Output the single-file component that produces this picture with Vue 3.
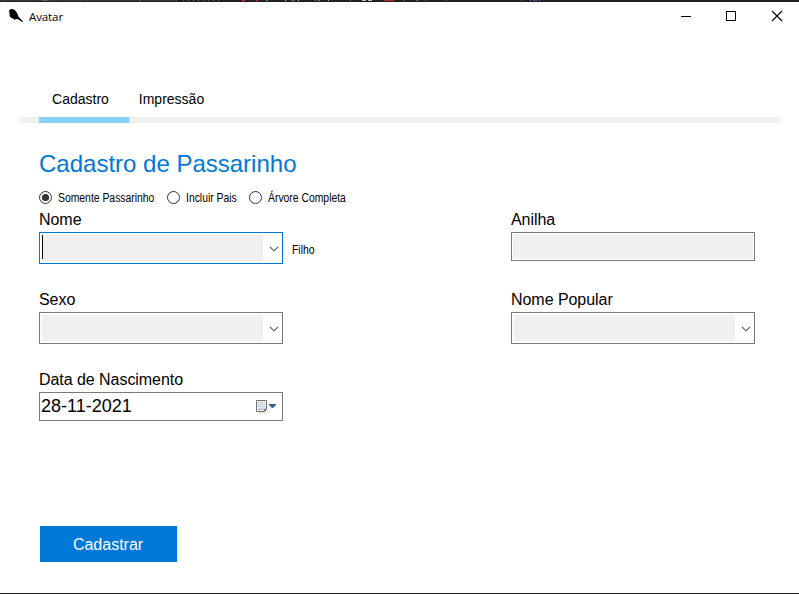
<script setup>
import { ref } from 'vue'

const tabs = ['Cadastro', 'Impressão']
const activeTab = ref('Cadastro')
const modes = [
  { label: 'Somente Passarinho', cls: 'm1' },
  { label: 'Incluir Pais', cls: 'm2' },
  { label: 'Árvore Completa', cls: 'm3' },
]
const mode = ref('Somente Passarinho')
// Coloured pixels visible along the strip above the window: x, width, colour
const specks = [
  [3, 1, '#315a78'], [23, 2, '#555'], [42, 6, '#606060'], [50, 1, '#397078'], [54, 1, '#555'], [66, 1, '#315a78'],
  [74, 1, '#704848'], [81, 1, '#555'], [86, 1, '#555'], [139, 2, '#555'], [176, 1, '#2b5c88'], [183, 1, '#486a78'],
  [188, 1, '#397078'], [193, 1, '#486a78'], [198, 1, '#397078'], [203, 1, '#705048'], [208, 1, '#486a78'],
  [213, 1, '#705048'], [218, 1, '#397078'], [242, 3, '#d53740'], [256, 2, '#b83440'], [266, 2, '#777'],
  [285, 1, '#e3c784'], [291, 4, '#286bab'], [298, 1, '#e3c784'], [315, 1, '#999'], [318, 2, '#3c88d0'],
  [328, 1, '#aaa'], [350, 1, '#777'], [362, 4, '#bbb'], [368, 4, '#bbb'], [384, 10, '#b9262f'],
  [404, 1, '#2784c8'], [416, 2, '#2773a8'], [425, 2, '#444'], [445, 2, '#444'], [521, 2, '#444'],
  [530, 1, '#2784c8'], [533, 4, '#704090'], [539, 1, '#2784c8'],
]
</script>

<template>
  <div class="window">
    <svg class="strip" width="799" height="2" shape-rendering="crispEdges">
      <rect width="799" height="2" fill="#211f20" />
      <rect width="176" height="1" fill="#393838" />
      <rect v-for="s in specks" :key="s[0]" :x="s[0]" y="0" :width="s[1]" height="1" :fill="s[2]" />
    </svg>
    <header class="titlebar">
      <svg class="bird" width="16" height="16" viewBox="0 0 16 16">
        <path d="M1 2.6 2.4 1.2 4.4.9 6.4 1.7 8 3.6l1.6 2.3.8 2.6 1.3 1.5 3.3 3.4-.6.8-3.8-2.6-2.2-.5-1.2.1-.1 1-.9-.1.1-1.2-2.9-.9L1.8 8.4 1.5 5z" fill="#000" />
      </svg>
      <span class="title">Avatar</span>
      <div class="controls">
        <svg width="12" height="12" shape-rendering="crispEdges"><path d="M1 6.5h10" stroke="#000" /></svg>
        <svg width="12" height="12" shape-rendering="crispEdges"><rect x="1.5" y="1.5" width="9" height="9" fill="none" stroke="#000" /></svg>
        <svg width="12" height="12"><path d="M1 1l10 10M11 1L1 11" stroke="#000" stroke-width="1.1" /></svg>
      </div>
    </header>

    <nav class="tabs">
      <button v-for="t in tabs" :key="t" :class="['tab', { active: t === activeTab }]" @click="activeTab = t">{{ t }}</button>
    </nav>

    <main class="page">
      <h1>Cadastro de Passarinho</h1>
      <div class="modes">
        <div v-for="m in modes" :key="m.label" :class="['mode', m.cls]" @click="mode = m.label">
          <svg width="13" height="13" viewBox="0 0 13 13">
            <circle cx="6.5" cy="6.5" r="6" fill="#fff" stroke="#333" />
            <circle v-if="mode === m.label" cx="6.5" cy="6.5" r="3.6" fill="#333" />
          </svg>
          <span class="small">{{ m.label }}</span>
        </div>
      </div>

      <div class="form">
        <div class="field">
          <label>Nome</label>
          <div class="line">
            <div class="combo focused">
              <div class="fill"><i class="caret"></i></div>
              <svg class="chev" width="10" height="6"><path d="M1 .8l4 4 4-4" fill="none" stroke="#555" stroke-width="1.15" /></svg>
            </div>
            <span class="small filho">Filho</span>
          </div>
        </div>
        <div class="field">
          <label>Anilha</label>
          <div class="textbox"><div class="fill"></div></div>
        </div>
        <div v-for="f in ['Sexo', 'Nome Popular']" :key="f" class="field">
          <label>{{ f }}</label>
          <div class="combo">
            <div class="fill"></div>
            <svg class="chev" width="10" height="6"><path d="M1 .8l4 4 4-4" fill="none" stroke="#555" stroke-width="1.15" /></svg>
          </div>
        </div>
        <div class="field">
          <label>Data de Nascimento</label>
          <div class="date">
            <span>28-11-2021</span>
            <svg width="22" height="14" viewBox="0 0 22 14">
              <path d="M2 13h8l2-2" fill="none" stroke="#ddd5d0" />
              <path d="M.5.5h10v9l-2 2h-8z" fill="#f4f7fa" stroke="#776c69" />
              <path d="M2 2h7v8H2z" fill="#b4c6d8" />
              <path d="M2 3.5h7M2 5.5h7M2 7.5h7M3.5 2v7M5.5 2v7M7.5 2v7" stroke="#e9f1f8" stroke-width=".7" />
              <path d="M8.5 11.5v-2h2" fill="none" stroke="#776c69" />
              <path d="M13 4h7v1l-3 3h-1l-3-3z" fill="#3e5b8c" />
            </svg>
          </div>
        </div>
      </div>
      <button class="submit">Cadastrar</button>
    </main>
  </div>
</template>

<style>
body { margin: 0; background: #fff; overflow: hidden; }
</style>

<style scoped>
* { box-sizing: border-box; }
svg { display: block; flex: none; }
button { border: 0; padding: 0; background: none; font-family: inherit; }
.window {
  width: 799px; height: 594px; background: #fff; color: #000;
  border-bottom: 1px solid #202020;
  font-family: "Liberation Sans", Arial, sans-serif;
  display: flex; flex-direction: column;
}
.titlebar { height: 28px; flex: none; display: flex; align-items: center; padding: 0 16px 0 8px; }
.title { font: 11.5px/16px "Open Sans", "Noto Sans", sans-serif; letter-spacing: -.1px; margin-left: 5px; padding-top: 1px; }
.controls { margin-left: auto; display: flex; gap: 34px; }
.controls svg:first-child { margin-right: -1px; }
.tabs {
  margin: 52px 19px 0 20px; height: 41px; flex: none; padding-left: 19px; display: flex;
  background: linear-gradient(#f0f0f0, #f0f0f0) bottom / 100% 6px no-repeat;
}
.tab { width: 90px; height: 41px; padding: 0 5px 6px 0; font-size: 14px; line-height: 35px; text-align: center; color: #000; }
.tab:first-child { padding-left: 0; padding-right: 7px; }
.tab.active { border-bottom: 6px solid #87cefa; padding-bottom: 0; }
.page { padding: 26px 0 0 39px; display: flex; flex-direction: column; align-items: flex-start; }
h1 { margin: 0; font-size: 24px; font-weight: 400; line-height: 30px; color: #0078d7; }
.modes { display: flex; height: 18px; margin-top: 9px; padding-top: 3px; align-items: flex-start; }
.mode { display: flex; align-items: center; gap: 6px; height: 13px; }
.mode .small { padding-top: 2px; }
.m1 { width: 128px; }
.m2 { width: 82px; }
.small { font-size: 12px; line-height: 15px; white-space: nowrap; transform: scaleX(.865); transform-origin: left; }
.form { display: grid; grid-template-columns: 244px 244px; column-gap: 228px; grid-auto-rows: 80px; margin-top: 4px; }
label { display: block; font-size: 16px; line-height: 20px; height: 22px; letter-spacing: -.05px; }
.line { display: flex; align-items: center; }
.combo { width: 244px; height: 32px; flex: none; border: 1px solid #7a7a7a; padding: 2px 3px 2px 2px; display: flex; align-items: center; justify-content: space-between; }
.combo.focused { border-color: #0078d7; }
.combo .fill { width: 221px; height: 26px; }
.chev { margin-top: 2px; }
.fill { background: #f0f0f0; }
.caret { display: block; width: 1px; height: 24px; background: #000; }
.filho { margin: 4px 0 0 9px; }
.textbox { width: 244px; height: 29px; border: 1px solid #7a7a7a; padding: 1px; }
.textbox .fill { height: 100%; }
.date { width: 244px; height: 29px; border: 1px solid #7a7a7a; padding: 0 4px 0 1px; display: flex; align-items: center; justify-content: space-between; font-size: 18px; line-height: 27px; }
.submit { margin: 76px 0 0 1px; width: 137px; height: 36px; padding: 2px 1px 0 0; background: #0078d7; color: #fff; font-size: 16px; line-height: 34px; }
</style>
